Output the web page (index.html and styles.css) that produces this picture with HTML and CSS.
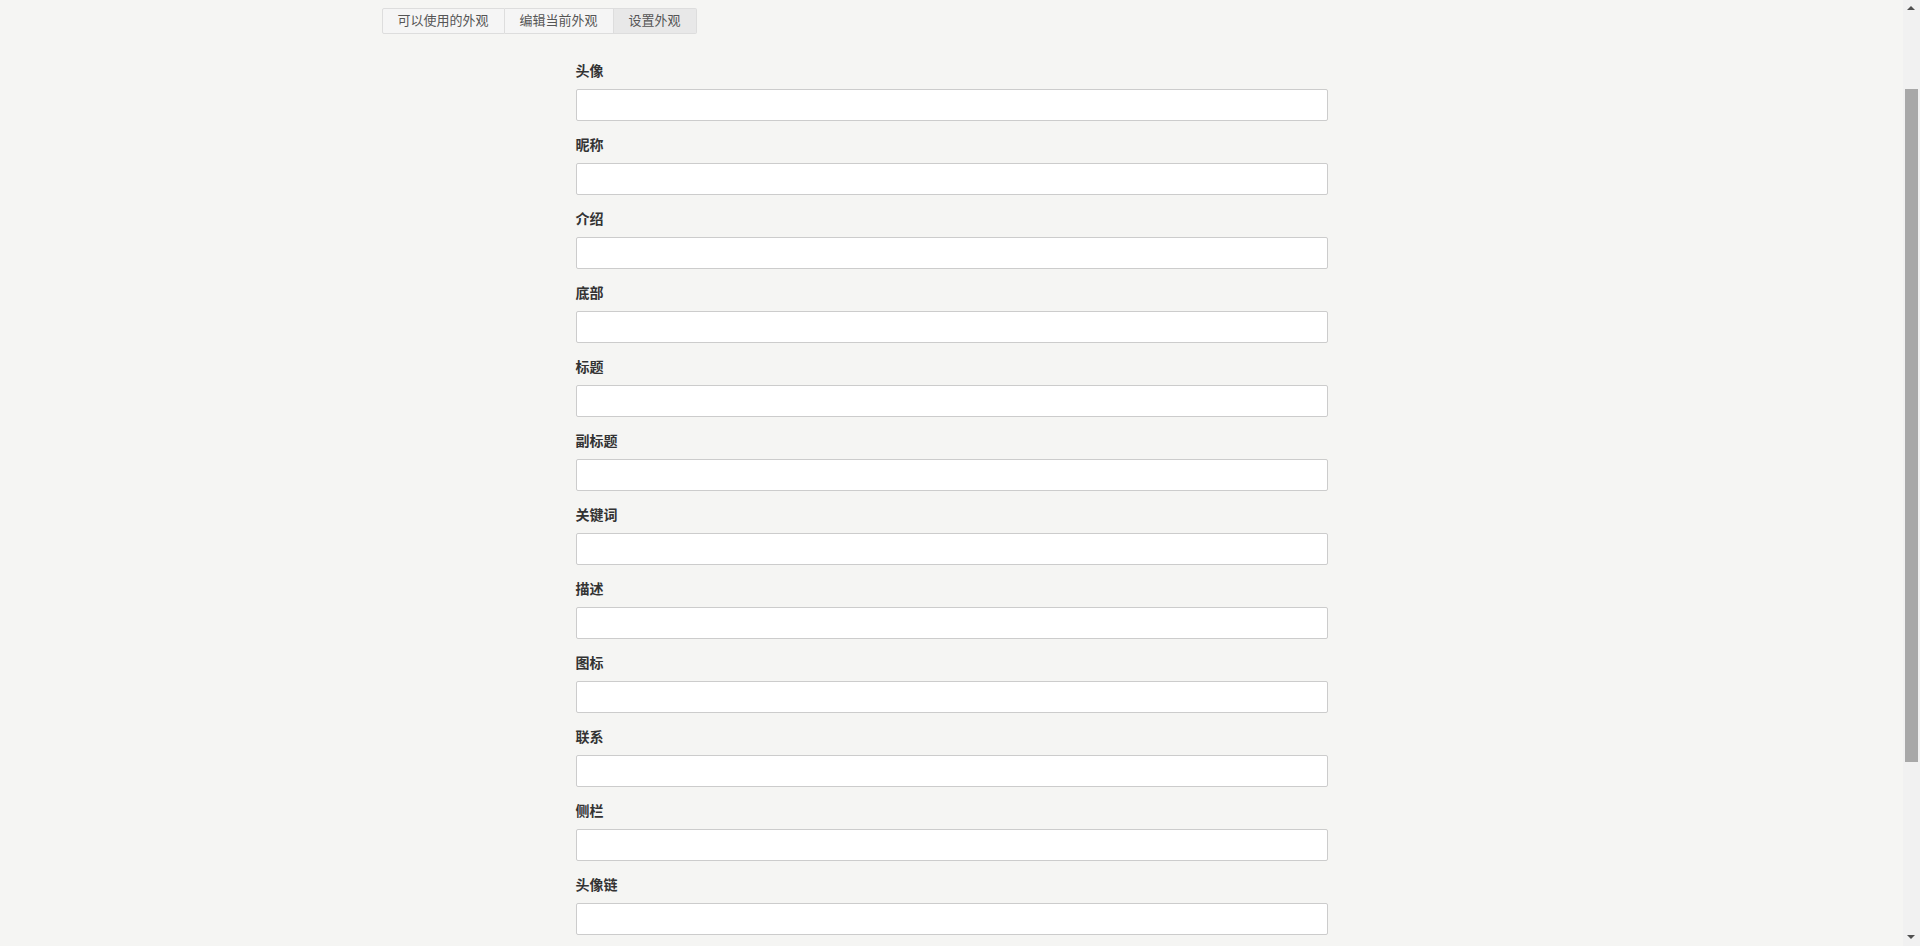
FILE: index.html
```html
<!DOCTYPE html>
<html lang="zh-CN">
<head>
   <meta charset="UTF-8">
   <meta name="viewport" content="width=device-width, initial-scale=1.0">
   <title>设置外观</title>
   <link rel="stylesheet" href="styles.css">
</head>
<body>
   <div class="container">
       <div class="tabs">
           <a class="tab" href="#">可以使用的外观</a>
           <a class="tab" href="#">编辑当前外观</a>
           <a class="tab active" href="#">设置外观</a>
       </div>

       <form class="settings-form">
           <div class="form-group">
               <label>头像</label>
               <input type="text" class="form-control">
           </div>
           <div class="form-group">
               <label>昵称</label>
               <input type="text" class="form-control">
           </div>
           <div class="form-group">
               <label>介绍</label>
               <input type="text" class="form-control">
           </div>
           <div class="form-group">
               <label>底部</label>
               <input type="text" class="form-control">
           </div>
           <div class="form-group">
               <label>标题</label>
               <input type="text" class="form-control">
           </div>
           <div class="form-group">
               <label>副标题</label>
               <input type="text" class="form-control">
           </div>
           <div class="form-group">
               <label>关键词</label>
               <input type="text" class="form-control">
           </div>
           <div class="form-group">
               <label>描述</label>
               <input type="text" class="form-control">
           </div>
           <div class="form-group">
               <label>图标</label>
               <input type="text" class="form-control">
           </div>
           <div class="form-group">
               <label>联系</label>
               <input type="text" class="form-control">
           </div>
           <div class="form-group">
               <label>侧栏</label>
               <input type="text" class="form-control">
           </div>
           <div class="form-group">
               <label>头像链</label>
               <input type="text" class="form-control">
           </div>
       </form>
   </div>

   <!-- page scrollbar -->
   <div class="scrollbar">
       <span class="scroll-arrow up"></span>
       <span class="scroll-thumb"></span>
       <span class="scroll-arrow down"></span>
   </div>
</body>
</html>
```

FILE: styles.css
```css
* {
    margin: 0;
    padding: 0;
    box-sizing: border-box;
}

body {
    font-family: "Liberation Sans", "Noto Sans CJK SC", sans-serif;
    background-color: #f5f5f3;
    color: #333;
    padding-right: 17px;
}

.container {
    width: 1140px;
    margin: 0 auto;
    padding: 8px 0 340px;
}

.tabs {
    display: flex;
}

.tab {
    display: block;
    height: 26px;
    line-height: 24px;
    padding: 0 15px;
    font-size: 13px;
    color: #555;
    text-decoration: none;
    background-color: #f5f5f5;
    border: 1px solid #ddd;
    border-left: none;
}

.tab:first-child {
    border-left: 1px solid #ddd;
    border-radius: 2px 0 0 2px;
}

.tab:last-child {
    border-radius: 0 2px 2px 0;
}

.tab.active {
    background-color: #e8e8e8;
}

.settings-form {
    width: 752px;
    margin: 27px auto 0;
}

.form-group {
    margin-bottom: 14px;
}

.form-group label {
    display: block;
    font-size: 14px;
    line-height: 20px;
    font-weight: bold;
    color: #333;
    margin-bottom: 8px;
}

.form-control {
    display: block;
    width: 100%;
    height: 32px;
    padding: 6px 10px;
    font-size: 13px;
    background: #fff;
    border: 1px solid #ccc;
    border-radius: 2px;
    outline: none;
}

.scrollbar {
    position: fixed;
    top: 0;
    right: 0;
    bottom: 0;
    width: 17px;
    background-color: #f1f1f1;
}

.scroll-thumb {
    position: absolute;
    top: 89px;
    left: 2px;
    width: 13px;
    height: 673px;
    background-color: #a8a8a8;
}

.scroll-arrow {
    position: absolute;
    left: 4px;
    width: 0;
    height: 0;
    border-left: 4px solid transparent;
    border-right: 4px solid transparent;
}

.scroll-arrow.up {
    top: 6px;
    border-bottom: 4px solid #505050;
}

.scroll-arrow.down {
    bottom: 7px;
    border-top: 4px solid #505050;
}
```
